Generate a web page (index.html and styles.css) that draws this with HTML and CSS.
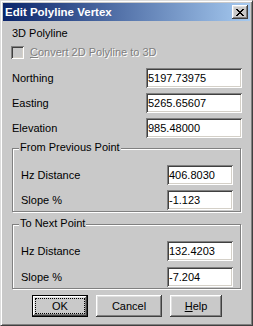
FILE: index.html
```html
<!DOCTYPE html>
<html>
<head>
<meta charset="utf-8">
<link rel="stylesheet" href="styles.css">
</head>
<body>
<div class="window">
  <div class="titlebar">
    <span class="title">Edit Polyline Vertex</span>
    <span class="close">
      <svg width="8" height="7" viewBox="0 0 8 7" shape-rendering="crispEdges">
        <rect x="0" y="0" width="2" height="1"/><rect x="6" y="0" width="2" height="1"/>
        <rect x="1" y="1" width="2" height="1"/><rect x="5" y="1" width="2" height="1"/>
        <rect x="2" y="2" width="4" height="1"/>
        <rect x="3" y="3" width="2" height="1"/>
        <rect x="2" y="4" width="4" height="1"/>
        <rect x="1" y="5" width="2" height="1"/><rect x="5" y="5" width="2" height="1"/>
        <rect x="0" y="6" width="2" height="1"/><rect x="6" y="6" width="2" height="1"/>
      </svg>
    </span>
  </div>
  <div class="content">
    <div class="caption">3D Polyline</div>
    <div class="check">
      <span class="box"></span>
      <span class="disabled"><u>C</u>onvert 2D Polyline to 3D</span>
    </div>
    <div class="field first">
      <span>Northing</span>
      <span class="input wide">5197.73975</span>
    </div>
    <div class="field">
      <span>Easting</span>
      <span class="input wide">5265.65607</span>
    </div>
    <div class="field">
      <span>Elevation</span>
      <span class="input wide">985.48000</span>
    </div>
    <div class="group g1">
      <span class="group-title">From Previous Point</span>
      <div class="field first">
        <span>Hz Distance</span>
        <span class="input narrow">406.8030</span>
      </div>
      <div class="field">
        <span>Slope %</span>
        <span class="input narrow">-1.123</span>
      </div>
    </div>
    <div class="group g2">
      <span class="group-title">To Next Point</span>
      <div class="field first">
        <span>Hz Distance</span>
        <span class="input narrow">132.4203</span>
      </div>
      <div class="field">
        <span>Slope %</span>
        <span class="input narrow">-7.204</span>
      </div>
    </div>
    <div class="buttons">
      <span class="btn default ok"><span class="focus">OK</span></span>
      <span class="btn cancel">Cancel</span>
      <span class="btn help"><span><u>H</u>elp</span></span>
    </div>
  </div>
</div>
</body>
</html>
```

FILE: styles.css
```css
* { box-sizing: border-box; }
html, body { margin: 0; padding: 0; }
body {
  font-family: "Liberation Sans", Arial, sans-serif;
  font-size: 11px;
  line-height: 13px;
  color: #000;
  background: #ffffff;
}
.window {
  width: 253px;
  height: 326px;
  background: #c9c9c9;
  border: 1px solid;
  border-color: #dcdcdc #404040 #404040 #dcdcdc;
  box-shadow: inset 1px 1px 0 #fff, inset -1px -1px 0 #808080;
  padding: 2px;
  display: flex;
  flex-direction: column;
}
.titlebar {
  height: 18px;
  flex: none;
  display: flex;
  align-items: center;
  justify-content: space-between;
  padding: 0 2px 0 2px;
  background: linear-gradient(to right, #0a246a, #a6caf0);
}
.title {
  color: #fff;
  font-weight: bold;
  font-size: 11.5px;
  line-height: 13px;
}
.close {
  width: 16px;
  height: 14px;
  padding: 4px 0 0 4px;
  background: #c9c9c9;
  box-shadow: inset -1px -1px 0 #404040, inset 1px 1px 0 #fff,
              inset -2px -2px 0 #808080, inset 2px 2px 0 #dfdfdf;
  display: flex;
  align-items: flex-start;
}
.close svg { display: block; fill: #000; }
.content {
  flex: 1;
  display: flex;
  flex-direction: column;
  padding: 6px 8px 0 9px;
}
.caption { height: 13px; }
.check {
  display: flex;
  align-items: center;
  gap: 6px;
  margin: 6px 0 0 -1px;
  height: 13px;
}
.box {
  width: 13px;
  height: 13px;
  flex: none;
  background: #c9c9c9;
  box-shadow: inset 1px 1px 0 #808080, inset -1px -1px 0 #fff,
              inset 2px 2px 0 #404040, inset -2px -2px 0 #d4d0c8;
}
.disabled {
  color: #808080;
  text-shadow: 1px 1px 0 #fff;
}
.field {
  display: flex;
  justify-content: space-between;
  align-items: center;
  margin-top: 5px;
}
.field.first { margin-top: 9px; }
.input {
  height: 20px;
  line-height: 20px;
  padding-left: 2px;
  background: #fff;
  box-shadow: inset 1px 1px 0 #808080, inset -1px -1px 0 #fff,
              inset 2px 2px 0 #404040, inset -2px -2px 0 #d4d0c8;
}
.input.wide { width: 96px; }
.input.narrow { width: 66px; }
.group {
  display: flex;
  flex-direction: column;
  border: 1px solid #808080;
  box-shadow: inset 1px 1px 0 #fff, 1px 1px 0 #fff;
  margin-right: 1px;
  padding: 0 7px 1px 8px;
}
.group .field.first { margin-top: 11px; }
.g1 { margin-top: 10px; }
.g2 { margin-top: 12px; }
.g2 .field { margin-top: 6px; }
.g2 .field.first { margin-top: 11px; }
.group-title {
  align-self: flex-start;
  margin: -8px 0 0 -2px;
  padding: 0 1px;
  background: #c9c9c9;
  line-height: 13px;
}
.buttons {
  display: flex;
  gap: 8px;
  margin: 6px 0 0 20px;
}
.btn {
  height: 22px;
  display: flex;
  align-items: center;
  justify-content: center;
  background: #c9c9c9;
  box-shadow: inset -1px -1px 0 #404040, inset 1px 1px 0 #fff,
              inset -2px -2px 0 #808080, inset 2px 2px 0 #dfdfdf;
}
.btn.default {
  border: 1px solid #000;
  align-items: stretch;
  justify-content: stretch;
}
.focus {
  flex: 1;
  margin: 2px;
  border: 1px dotted #000;
  display: flex;
  align-items: center;
  justify-content: center;
}
.ok { width: 56px; }
.cancel { width: 66px; }
.help { width: 52px; }
```
